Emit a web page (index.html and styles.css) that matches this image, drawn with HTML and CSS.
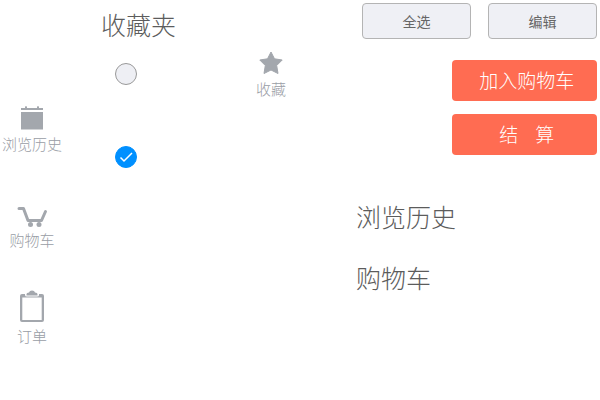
FILE: index.html
```html
<!DOCTYPE html>
<html lang="zh-CN">
<head>
<meta charset="utf-8">
<meta name="viewport" content="width=device-width, initial-scale=1">
<title>收藏夹</title>
<link rel="stylesheet" href="styles.css">
</head>
<body>
<div class="page">
  <nav class="sidebar">
    <a class="icon-link" href="#history">
      <svg class="icon" width="32" height="26" viewBox="0 0 32 26" aria-hidden="true">
        <path d="M5 3h4V2q1-2 2 0v1h10V2q1-2 2 0v1h4v2H5zM5 7h22v17.500H5z"/>
      </svg>
      <span>浏览历史</span>
    </a>
    <a class="icon-link" href="#cart">
      <svg class="icon" width="32" height="26" viewBox="0 0 32 26" aria-hidden="true">
        <path class="stroke" d="M3 7.500H7.500L12 19.500H25.500L29.500 10.500"/>
        <circle cx="14.500" cy="23.500" r="2.500"/>
        <circle cx="23" cy="23.500" r="2.500"/>
      </svg>
      <span>购物车</span>
    </a>
    <a class="icon-link" href="#orders">
      <svg class="icon" width="32" height="34" viewBox="0 0 32 34" aria-hidden="true">
        <path fill-rule="evenodd" d="M6 5H9V6Q9 7.500 11 7.500H21Q23 7.500 23 6V5H26Q28 5 28 7V31Q28 33 26 33H6Q4 33 4 31V7Q4 5 6 5ZM6.300 8.500V31H25.700V8.500Z"/>
        <path d="M10.500 6.500V5Q10.500 3.500 13 3.500Q13.500 1.500 16 1.500T19 3.500Q21.500 3.500 21.500 5V6.500Z"/>
      </svg>
      <span>订单</span>
    </a>
  </nav>

  <main class="favorites">
    <h1 class="heading">收藏夹</h1>
    <div class="choices">
      <label class="choice">
        <input type="checkbox" aria-label="未选">
      </label>
      <label class="choice">
        <input type="checkbox" aria-label="已选" checked>
        <svg class="tick" width="22" height="22" viewBox="0 0 22 22" aria-hidden="true">
          <path d="M5.500 11.500L9 15L17 7"/>
        </svg>
      </label>
    </div>
  </main>

  <div class="saved">
    <a class="icon-link saved-link" href="#saved">
      <svg class="icon" width="26" height="26" viewBox="0 0 26 26" aria-hidden="true">
        <path class="star" d="M13 2L16.500 8.800L24.200 10L18.700 15.500L20 23.500L13 20L6 23.500L7.300 15.500L1.800 10L9.500 8.800Z"/>
      </svg>
      <span>收藏</span>
    </a>
  </div>

  <section class="panel">
    <div class="tools">
      <button class="button plain" type="button">全选</button>
      <button class="button plain" type="button">编辑</button>
    </div>
    <div class="actions">
      <button class="button primary" type="button">加入购物车</button>
      <button class="button primary spaced" type="button"><span>结</span><span>算</span></button>
    </div>
    <div class="titles">
      <h2 class="heading" id="history">浏览历史</h2>
      <h2 class="heading" id="cart">购物车</h2>
    </div>
  </section>
</div>
</body>
</html>
```
FILE: styles.css
```css
* {
  box-sizing: border-box;
}

body {
  margin: 0;
  background: #fff;
  color: #5c5c5c;
  font-family: "Noto Sans CJK SC", sans-serif;
  font-weight: 300;
}

.page {
  display: grid;
  grid-template-columns: 101px 155fr 100fr 241fr;
  min-height: 100vh;
  padding-right: 3px;
}

.sidebar {
  display: grid;
  grid-auto-rows: 96px;
  width: 64px;
  padding-top: 59px;
}

.icon-link {
  display: flex;
  flex-direction: column;
  align-items: center;
  justify-content: flex-end;
  gap: 2px;
  color: #999da5;
  font-size: 15px;
  line-height: 22px;
  text-decoration: none;
}

.icon {
  display: block;
  fill: #a3a7ad;
}

.icon .stroke {
  fill: none;
  stroke: #a3a7ad;
  stroke-width: 3;
  stroke-linecap: round;
  stroke-linejoin: round;
}

.icon .star {
  stroke: #a3a7ad;
  stroke-width: 1;
  stroke-linejoin: round;
}

.heading {
  margin: 0;
  font-size: 25px;
  font-weight: 300;
  line-height: 36px;
}

.favorites {
  padding-top: 6px;
}

.choices {
  display: flex;
  flex-direction: column;
  align-items: flex-start;
  gap: 61px;
  padding: 21px 14px;
}

.choice {
  display: grid;
}

.choice input {
  grid-area: 1 / 1;
  appearance: none;
  width: 22px;
  height: 22px;
  margin: 0;
  border: 1px solid #999;
  border-radius: 50%;
  background: #eeeff4;
}

.choice input:checked {
  border-color: #0090ff;
  background: #0090ff;
}

.tick {
  grid-area: 1 / 1;
  z-index: 1;
  fill: none;
  stroke: #fff;
  stroke-width: 1.5;
  pointer-events: none;
}

.saved {
  display: flex;
  align-items: flex-start;
  padding-top: 50px;
}

.panel {
  display: flex;
  flex-direction: column;
  padding-top: 3px;
}

.button {
  border-radius: 4px;
  font-family: inherit;
  font-weight: 300;
}

.tools {
  display: flex;
  gap: 17px;
  padding-left: 6px;
}

.plain {
  flex: 1;
  height: 36px;
  padding: 0;
  border: 1px solid #b4b4b4;
  background: #eff0f5;
  color: #666;
  font-size: 14px;
  font-weight: 400;
}

.actions {
  display: flex;
  flex-direction: column;
  align-self: flex-end;
  gap: 13px;
  width: 60%;
  margin-top: 21px;
}

.primary {
  height: 41px;
  padding: 0 0 2px 4px;
  border: 0;
  background: #ff6c52;
  color: #fff;
  font-size: 19px;
}

.spaced {
  display: flex;
  align-items: center;
  justify-content: center;
  gap: 17px;
}

.titles {
  display: flex;
  flex-direction: column;
  gap: 25px;
  margin-top: 43px;
}
```
